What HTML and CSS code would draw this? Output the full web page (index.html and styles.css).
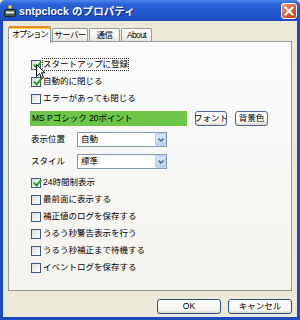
FILE: index.html
```html
<!DOCTYPE html>
<html lang="ja">
<head>
<meta charset="utf-8">
<title>sntpclock のプロパティ</title>
<link rel="stylesheet" href="styles.css">
</head>
<body>
<div class="window">
  <div class="titlebar">
    <svg class="app-icon" width="12" height="12" viewBox="0 0 12 12">
      <circle cx="6" cy="2" r="1.8" fill="#f4e23a" stroke="#a08a10" stroke-width="0.6"/>
      <rect x="0.5" y="4.5" width="11" height="7" rx="1" fill="#4a5a48" stroke="#1d261c"/>
      <rect x="2" y="6.5" width="8" height="2" fill="#e8efe6"/>
    </svg>
    <span class="title">sntpclock のプロパティ</span>
    <div class="close">
      <svg width="10" height="10" viewBox="0 0 10 10"><path d="M1.5 1.5 L8.5 8.5 M8.5 1.5 L1.5 8.5" stroke="#fff" stroke-width="2" stroke-linecap="square"/></svg>
    </div>
  </div>
  <div class="frame">
    <div class="tabs">
      <div class="tab active">オプション</div>
      <div class="tab w36">サーバー</div>
      <div class="tab w31">通信</div>
      <div class="tab w31">About</div>
    </div>
    <div class="panel">
      <div class="check"><span class="box checked"></span><span class="label focus">スタートアップに登録</span></div>
      <div class="check"><span class="box checked"></span><span class="label">自動的に閉じる</span></div>
      <div class="check"><span class="box"></span><span class="label">エラーがあっても閉じる</span></div>
      <div class="font-row">
        <div class="font-preview">MS Pゴシック 20ポイント</div>
        <div class="btn small w32">フォント</div>
        <div class="btn small w33">背景色</div>
      </div>
      <div class="field first">
        <span class="field-label">表示位置</span>
        <div class="select"><span>自動</span><span class="drop"><svg width="6" height="4" viewBox="0 0 6 4"><path d="M0.5 0.5 L3 3 L5.5 0.5" fill="none" stroke="#4d6185" stroke-width="1.3"/></svg></span></div>
      </div>
      <div class="field second">
        <span class="field-label">スタイル</span>
        <div class="select"><span>標準</span><span class="drop"><svg width="6" height="4" viewBox="0 0 6 4"><path d="M0.5 0.5 L3 3 L5.5 0.5" fill="none" stroke="#4d6185" stroke-width="1.3"/></svg></span></div>
      </div>
      <div class="group">
        <div class="check"><span class="box checked"></span><span class="label">24時間制表示</span></div>
        <div class="check"><span class="box"></span><span class="label">最前面に表示する</span></div>
        <div class="check"><span class="box"></span><span class="label">補正値のログを保存する</span></div>
        <div class="check"><span class="box"></span><span class="label">うるう秒警告表示を行う</span></div>
        <div class="check"><span class="box"></span><span class="label">うるう秒補正まで待機する</span></div>
        <div class="check"><span class="box"></span><span class="label">イベントログを保存する</span></div>
      </div>
    </div>
    <div class="actions">
      <div class="btn big">OK</div>
      <div class="btn big">キャンセル</div>
    </div>
  </div>
  <svg class="cursor" width="10" height="16" viewBox="0 0 10 16">
    <path d="M0.5 0.5 L0.5 12.5 L3.5 9.5 L5.5 14.5 L7.5 13.5 L5.5 8.8 L9 8.8 Z" fill="#fff" stroke="#000" stroke-width="1"/>
  </svg>
</div>
</body>
</html>
```

FILE: styles.css
```css
* { box-sizing: border-box; }
html, body { margin: 0; padding: 0; background: #ece9d8; }
body {
  font-family: "Liberation Sans", "Noto Sans CJK JP", sans-serif;
  font-size: 8.5px;
  color: #000;
}
.window {
  position: relative;
  width: 300px;
  height: 320px;
  background: #ece9d8;
  overflow: hidden;
}
.titlebar {
  height: 21px;
  display: flex;
  align-items: center;
  padding: 0 4px;
  background: linear-gradient(#4c86ea 0%, #2a62d8 20%, #2256cc 60%, #1d4cbf 100%);
  border-radius: 5px 5px 0 0;
}
.app-icon { flex: none; margin-top: 1px; }
.title {
  margin-left: 3px;
  color: #fff;
  font-weight: bold;
  font-size: 10.5px;
  letter-spacing: 0.1px;
  text-shadow: 1px 1px 0 #0f2d8a;
  line-height: 12px;
}
.close {
  margin-left: auto;
  width: 16px;
  height: 16px;
  margin-right: -1px;
  margin-top: 1px;
  border: 1px solid #fff;
  border-radius: 3px;
  background: linear-gradient(135deg, #f0a382 0%, #e06a44 45%, #c23c18 100%);
  display: flex;
  align-items: center;
  justify-content: center;
}
.frame {
  height: 299px;
  border: 3px solid #1e4cbf;
  border-top: none;
  padding: 5px 5px 0 5px;
}
.tabs {
  height: 15px;
  display: flex;
  align-items: flex-end;
  gap: 1px;
  position: relative;
  z-index: 2;
}
.tab {
  height: 13px;
  border: 1px solid #919b9c;
  border-bottom: none;
  border-radius: 2px 2px 0 0;
  background: linear-gradient(#ffffff, #f0efea 70%, #e6e4dc);
  display: flex;
  align-items: center;
  justify-content: center;
  line-height: 11px;
  padding-top: 1px;
  white-space: nowrap;
  letter-spacing: -0.6px;
}
.tab.active {
  width: 43px;
  height: 17px;
  margin-bottom: -2px;
  background: #fcfcfe;
  border-top: 2px solid #e68b2c;
  box-shadow: inset 0 1px 0 #ffc83c;
  padding-top: 0;
  padding-bottom: 2px;
  letter-spacing: -1.4px;
}
.w36 { width: 36px; }
.w31 { width: 31px; }
.w32 { width: 32px; }
.w33 { width: 33px; }
.panel {
  height: 250px;
  border: 1px solid #919b9c;
  background: linear-gradient(#fcfcfe, #f7f6f2 70%, #f3f2ec);
  padding: 14px 0 0 22px;
  position: relative;
  z-index: 1;
}
.check {
  height: 17px;
  display: flex;
  align-items: center;
}
.box {
  width: 10px;
  height: 10px;
  border: 1px solid #3b5a7d;
  background: linear-gradient(135deg, #dcdcd6, #fff);
  flex: none;
  position: relative;
}
.box.checked::after {
  content: "";
  position: absolute;
  left: 2.5px;
  top: -0.5px;
  width: 3px;
  height: 6px;
  border: solid #21a121;
  border-width: 0 2px 2px 0;
  transform: rotate(40deg);
}
.label {
  margin-left: 2px;
  line-height: 11px;
  white-space: nowrap;
}
.label.focus {
  outline: 1px dotted #333;
  outline-offset: 0;
}
.font-row {
  margin-top: 4px;
  margin-left: -1px;
  display: flex;
  align-items: center;
  height: 15px;
}
.font-preview {
  width: 157px;
  height: 15px;
  background: #6cc547;
  padding-left: 2px;
  line-height: 15px;
  white-space: nowrap;
}
.btn {
  border: 1px solid #4c6690;
  border-radius: 3px;
  background: linear-gradient(#ffffff, #f4f3ee 80%, #d8d5c8);
  display: flex;
  align-items: center;
  justify-content: center;
  white-space: nowrap;
  line-height: 11px;
}
.btn.small {
  height: 15px;
  margin-left: 8px;
}
.field {
  display: flex;
  align-items: center;
  height: 15px;
}
.field.first { margin-top: 6px; }
.field.second { margin-top: 7px; }
.field-label {
  width: 46px;
  line-height: 11px;
}
.select {
  width: 90px;
  height: 15px;
  border: 1px solid #7f9db9;
  background: #fff;
  display: flex;
  align-items: center;
  padding-left: 3px;
  line-height: 11px;
}
.drop {
  margin-left: auto;
  width: 11px;
  height: 13px;
  border: 1px solid #b9cbf6;
  border-radius: 2px;
  background: linear-gradient(#dce6fd, #bccff8);
  display: flex;
  align-items: center;
  justify-content: center;
}
.group { margin-top: 5px; }
.actions {
  margin-top: 8px;
  display: flex;
  justify-content: flex-end;
  gap: 7px;
}
.btn.big {
  width: 64px;
  height: 15px;
  border-color: #2c4f86;
}
.cursor {
  position: absolute;
  left: 36px;
  top: 64px;
  z-index: 5;
}
```
